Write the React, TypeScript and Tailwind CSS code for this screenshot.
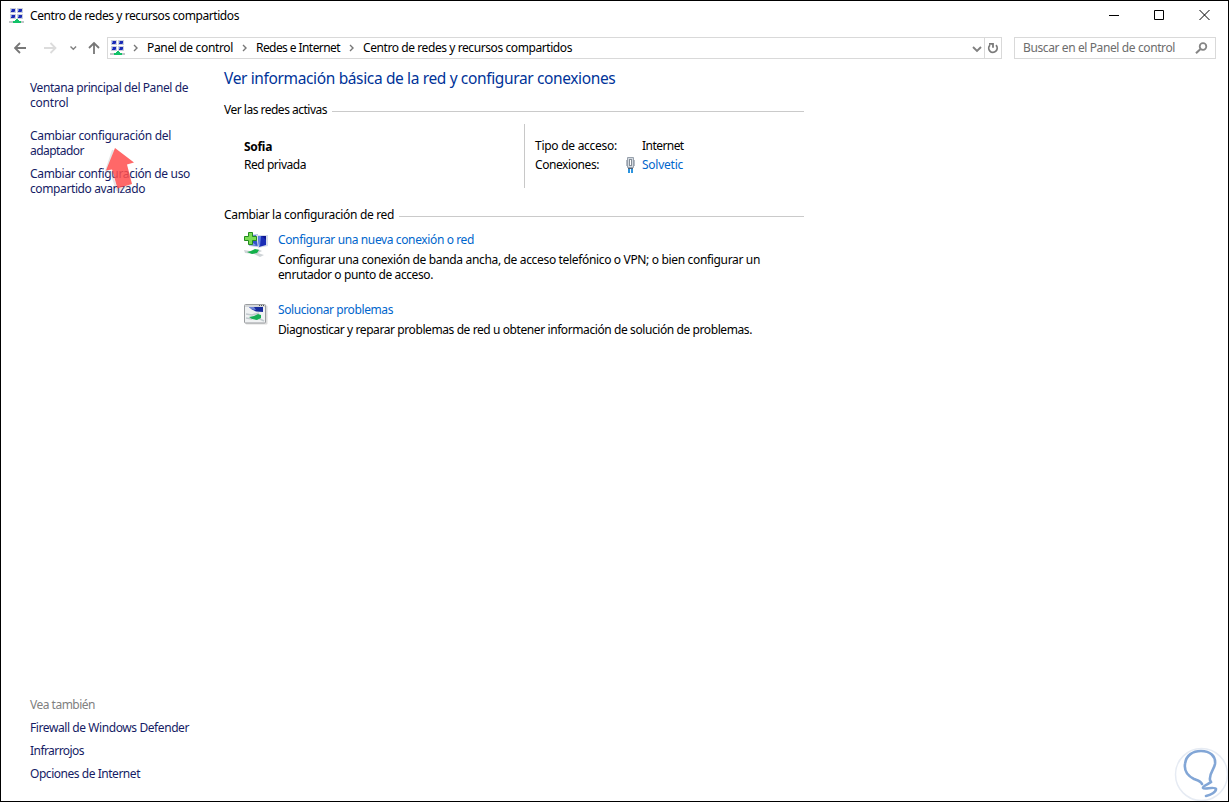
import type { ReactNode } from "react";

function NetworkIcon() {
  return (
    <svg width="16" height="16" viewBox="0 0 16 16" className="shrink-0" shapeRendering="crispEdges">
      {[[1, 0], [8, 0], [1, 6], [8, 6]].map(([x, y]) => (
        <g key={`${x}-${y}`}>
          <rect x={x} y={y} width="6" height="5" fill="#cdd1dc" />
          <rect x={x + 1} y={y + 1} width="4" height="3" fill="#1c2bb4" />
          <rect x={x + 1} y={y + 1} width="1" height="2" fill="#6f8ae6" />
          <rect x={x + 4} y={y + 3} width="1" height="1" fill="#4a66d8" />
        </g>
      ))}
      <rect x="0" y="13" width="15" height="2" fill="#c2c6c8" />
      <path d="M7 11h2v1h1v1h2v2H4v-2h2v-1h1z" fill="#12c268" />
    </svg>
  );
}

function Chevron() {
  return (
    <svg width="6" height="8" viewBox="0 0 6 8" className="shrink-0">
      <path d="M1 1l3 3-3 3" fill="none" stroke="#777" strokeWidth="1.4" />
    </svg>
  );
}

function GroupTitle({ children }: { children: ReactNode }) {
  return (
    <div className="flex h-[15px] w-[580px] items-center">
      {children}
      <span className="mt-[3px] ml-[5px] h-px flex-1 bg-[#cacaca]" />
    </div>
  );
}

function TitleBar() {
  return (
    <header className="flex h-[30px] shrink-0 items-center pl-2">
      <NetworkIcon />
      <span className="mb-[2px] ml-[5px] tracking-[-0.416px]">Centro de redes y recursos compartidos</span>
      <svg width="103" height="12" viewBox="0 0 103 12" className="mr-4 mb-[2px] ml-auto" fill="none" stroke="#000">
        <path d="M0 6.5h10M45.5 1.5h9v9h-9zM90.500 1l10 10M100.500 1l-10 10" />
      </svg>
    </header>
  );
}

function AddressRow() {
  return (
    <nav className="mt-[6px] flex h-[22px] shrink-0 items-center pr-3 pl-[13px] text-black">
      <svg width="87" height="14" viewBox="0 0 87 14" fill="none" strokeWidth="1.8" className="shrink-0">
        <path d="M12 7H1M6 2L1 7l5 5" stroke="#777" />
        <path d="M30 7h11M36.500 2l5 5-5 5" stroke="#dcdcdc" />
        <path d="M56.500 5.500l2.800 2.800 2.800-2.800" stroke="#808080" strokeWidth="1.4" />
        <path d="M80 13V2M75 7l5-5 5 5" stroke="#777" />
      </svg>
      <div className="ml-[6px] flex h-[22px] w-[895px] items-center border border-[#d9d9d9]">
        <span className="ml-[2px] flex"><NetworkIcon /></span>
        <span className="ml-[7px] flex"><Chevron /></span>
        <span className="mb-[2px] ml-[8px] w-[86px] whitespace-nowrap tracking-[-0.344px]">Panel de control</span>
        <span className="ml-[9px] flex"><Chevron /></span>
        <span className="mb-[2px] ml-[8px] w-[84px] whitespace-nowrap tracking-[-0.575px]">Redes e Internet</span>
        <span className="ml-[9px] flex"><Chevron /></span>
        <span className="mb-[2px] ml-[8px] whitespace-nowrap tracking-[-0.416px]">Centro de redes y recursos compartidos</span>
        <svg width="10" height="7" viewBox="0 0 10 7" className="mt-[2px] mr-[2px] ml-auto">
          <path d="M1 1l4 4 4-4" fill="none" stroke="#808080" strokeWidth="1.900" />
        </svg>
        <span className="flex h-full w-[17px] items-center justify-center border-l border-[#d9d9d9]">
          <svg width="12" height="12" viewBox="0 0 12 12" fill="none" stroke="#7a7a7a" strokeWidth="1.800">
            <path d="M9 3.200a4.200 4.200 0 1 1-6-.1M2 1.800h4v4" />
          </svg>
        </span>
      </div>
      <div className="ml-3 flex h-[22px] w-[202px] items-center border border-[#d9d9d9] pr-[7px] pl-2 text-[#6d6d6d]">
        <span className="mb-[2px] whitespace-nowrap tracking-[-0.39px]">Buscar en el Panel de control</span>
        <svg width="13" height="12" viewBox="0 0 13 12" className="ml-auto" fill="none" stroke="#858585">
          <circle cx="8" cy="4.500" r="3.300" strokeWidth="1.800" />
          <path d="M5.500 7L1 11.300" strokeWidth="2" />
        </svg>
      </div>
    </nav>
  );
}

function Sidebar() {
  return (
    <aside className="relative flex w-[223px] shrink-0 flex-col pl-[29px] text-[#151c65]">
      <a className="mt-[21px]">
        <span className="block tracking-[-0.414px]">Ventana principal del Panel de</span>
        <span className="block tracking-[-0.22px]">control</span>
      </a>
      <a className="mt-[18px]">
        <span className="block tracking-[-0.305px]">Cambiar configuración del</span>
        <span className="block tracking-[-0.543px]">adaptador</span>
      </a>
      <a className="mt-[8px]">
        <span className="block tracking-[-0.324px]">Cambiar configuración de uso</span>
        <span className="block tracking-[-0.394px]">compartido avanzado</span>
      </a>
      <svg width="34" height="46" viewBox="0 0 34 46" className="absolute top-[86px] left-[102px]">
        <path d="M10 5L3 26l5 1 6 18 13-4" fill="none" stroke="#999" strokeOpacity=".25" strokeWidth="2" />
        <path d="M12 3L31 17.500l-7 2L29 39 14.500 43.500 9 24.500 3 25.500z" fill="#ff4d4d" fillOpacity=".85" />
      </svg>
      <div className="mt-auto mb-[20px] flex flex-col gap-2">
        <span className="tracking-[-0.502px] text-[#808080]">Vea también</span>
        <a className="tracking-[-0.415px]">Firewall de Windows Defender</a>
        <a className="tracking-[-0.554px]">Infrarrojos</a>
        <a className="tracking-[-0.462px]">Opciones de Internet</a>
      </div>
    </aside>
  );
}

function NewConnectionIcon() {
  return (
    <svg width="24" height="26" viewBox="0 0 24 26">
      <path d="M5 3l9-1v13l-9-1z" fill="#b4c2e6" />
      <path d="M6 4l8-1v11l-8-1z" fill="#3353cb" />
      <path d="M6 9l6 4-6-.5z" fill="#8ba6ec" />
      <path d="M12 3h12v11l-10 2z" fill="#d5dcea" />
      <path d="M14 4h8v9l-7 2z" fill="#1a2db6" />
      <path d="M14 4h3l-1 10-1 1z" fill="#6083e2" />
      <path d="M18 4h4v4z" fill="#0b1590" />
      <path d="M0 18l6 1 8-2 4 2-4 2 6 2-4 2-6-3-9-1z" fill="#cfd4d7" />
      <path d="M3 20l4-1 4-2 4 1-2 3-5 1z" fill="#12b04a" />
      <path d="M4.500.5h4v4h4v4h-4v4h-4v-4h-4v-4h4z" fill="#7bdc55" stroke="#238b1f" />
    </svg>
  );
}

function TroubleshootIcon() {
  return (
    <svg width="24" height="21" viewBox="0 0 24 21">
      <rect x="1.500" y="1.500" width="22" height="19" rx="1" fill="#dcdcdc" />
      <rect x=".5" y=".5" width="21" height="18.500" rx="1" fill="#f0f2f3" stroke="#9a9da0" />
      <path d="M1 1h20v2H1z" fill="#d4d7da" />
      <path d="M15 1h1v1h-1zM17 1h1v1h-1zM19 1h1v1h-1z" fill="#555" />
      <path d="M5 3h14v5l-7-.5-4-2z" fill="#172a9c" />
      <path d="M5 3h5l2 3-4-.5z" fill="#6c83d5" />
      <path d="M2 10l6 1 7-2M14 14l6 3M2 14l6 1" stroke="#c1c9cd" strokeWidth="1.500" fill="none" />
      <path d="M5 13l5-1 4-2 3 1v3l-4 2-5-1z" fill="#16ad55" />
    </svg>
  );
}

function PlugIcon() {
  return (
    <svg width="9" height="16" viewBox="0 0 9 16">
      <path d="M1.500.5h6v10h-6z" fill="#d3d9e0" stroke="#98a1ac" />
      <path d="M.5 3v6M8.500 3v6" stroke="#b4bbc4" />
      <rect x="3.500" y="2.500" width="2" height="6" fill="#fff" stroke="#858d97" />
      <path d="M2 11h5v1H2z" fill="#4b6078" />
      <path d="M2 12h2v4H2zM5 12h2v4H5z" fill="#2c93de" />
    </svg>
  );
}

function Main() {
  return (
    <main className="flex-1 text-black">
      <h1 className="mt-[8px] h-[22px] text-[15.5px] leading-[22px] tracking-[-0.365px] text-[#003399]">
        Ver información básica de la red y configurar conexiones
      </h1>
      <div className="mt-[13px]">
        <GroupTitle><span className="tracking-[-0.5px]">Ver las redes activas</span></GroupTitle>
      </div>
      <section className="mt-[7px] flex h-16 pl-5">
        <div className="w-[280px] pt-[15px]">
          <div className="font-bold tracking-[-0.3px]">Sofia</div>
          <div className="mt-[3px] tracking-[-0.464px]">Red privada</div>
        </div>
        <div className="flex flex-col gap-1 border-l border-[#c8c8c8] pt-[14px] pl-[10px]">
          <div className="flex">
            <span className="w-[107px] tracking-[-0.269px]">Tipo de acceso:</span>
            <span className="tracking-[-0.55px]">Internet</span>
          </div>
          <div className="flex h-[15px] items-center">
            <span className="w-[91px] tracking-[-0.422px]">Conexiones:</span>
            <PlugIcon />
            <a className="ml-[7px] tracking-[-0.25px] text-[#0066cc]">Solvetic</a>
          </div>
        </div>
      </section>
      <div className="mt-[19px]">
        <GroupTitle><span className="tracking-[-0.337px]">Cambiar la configuración de red</span></GroupTitle>
      </div>
      <section className="mt-[10px] flex gap-[10px] pl-5">
        <NewConnectionIcon />
        <div className="whitespace-nowrap">
          <a className="block tracking-[-0.378px] text-[#0066cc]">Configurar una nueva conexión o red</a>
          <p className="mt-[5px] tracking-[-0.339px]">
            Configurar una conexión de banda ancha, de acceso telefónico o VPN; o bien configurar un
          </p>
          <p className="tracking-[-0.398px]">enrutador o punto de acceso.</p>
        </div>
      </section>
      <section className="mt-[20px] flex gap-[10px] pl-5">
        <span className="mt-[2px]"><TroubleshootIcon /></span>
        <div className="whitespace-nowrap">
          <a className="block tracking-[-0.4px] text-[#0066cc]">Solucionar problemas</a>
          <p className="mt-[5px] tracking-[-0.41px]">
            Diagnosticar y reparar problemas de red u obtener información de solución de problemas.
          </p>
        </div>
      </section>
    </main>
  );
}

function Watermark() {
  return (
    <svg width="55" height="55" viewBox="0 0 55 55" className="absolute right-[-1px] bottom-[-1px]" fill="none">
      <circle cx="27.500" cy="27.500" r="26" stroke="#e6ebf3" strokeWidth="1.500" />
      <path d="M28 37c-1-3-4-3.500-8-5-6-3-10-8-9-15C12 8 19 4 27 4c9 0 15 5 14 13-1 6-6 9-5 16l1 2c-2 2-9 4-8 6 1 2 12-2 13 1 0 3-5 6-10 7" stroke="#82a6d6" strokeWidth="2.600" strokeLinecap="round" />
    </svg>
  );
}

export default function App() {
  return (
    <div className="relative flex h-[802px] w-[1229px] flex-col overflow-hidden border border-black bg-white font-['Noto_Sans',sans-serif] text-[12px] leading-[15px] text-black">
      <TitleBar />
      <AddressRow />
      <div className="flex flex-1">
        <Sidebar />
        <Main />
      </div>
      <Watermark />
    </div>
  );
}
